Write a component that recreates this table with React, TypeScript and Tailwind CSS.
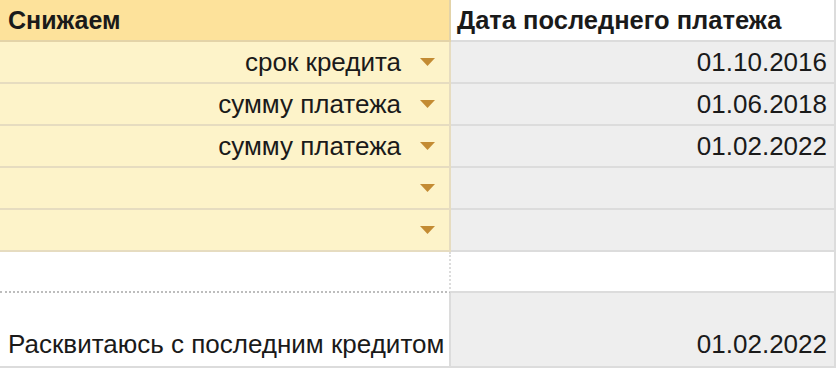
import React from 'react';

type Row = { mode: string; date: string };

const rows: Row[] = [
  { mode: 'срок кредита', date: '01.10.2016' },
  { mode: 'сумму платежа', date: '01.06.2018' },
  { mode: 'сумму платежа', date: '01.02.2022' },
  { mode: '', date: '' },
  { mode: '', date: '' },
];

function Caret() {
  return (
    <svg width="15" height="8" viewBox="0 0 15 8" className="shrink-0">
      <path d="M0 0 H15 L7.5 8 Z" fill="#c38b33" />
    </svg>
  );
}

export default function App() {
  return (
    <div
      className="w-[836px] h-[368px] overflow-hidden bg-white text-[#1a1a1a]"
      style={{ fontFamily: '"Liberation Sans", Arial, sans-serif' }}
    >
      {/* header */}
      <div className="grid grid-cols-[451px_385px] h-[42px]">
        <div className="flex items-center pl-2 pt-[1px] bg-[#fde29b] border-b-2 border-r-2 border-[#e3d3a8] text-[25px] font-bold">
          Снижаем
        </div>
        <div className="flex items-center pl-[6px] pt-[1px] bg-white border-b-2 border-r-2 border-[#dcdcdc] text-[25.5px] font-bold">
          Дата последнего платежа
        </div>
      </div>

      {rows.map((r, i) => (
        <div key={i} className="grid grid-cols-[451px_385px] h-[42px]">
          <div className="flex items-center justify-end gap-[19px] pr-[14px] bg-[#fdf3c9] border-b-2 border-r-2 border-[#e6dcc0] text-[26px]">
            <span>{r.mode}</span>
            <Caret />
          </div>
          <div className="flex items-center justify-end pr-[7px] bg-[#eeeeee] border-b-2 border-r-2 border-[#dcdcdc] text-[26px]">
            {r.date}
          </div>
        </div>
      ))}

      {/* spacer row */}
      <div className="grid grid-cols-[451px_385px] h-[41px]">
        <div className="bg-white border-b-2 border-dotted border-r-2 border-r-[#dcdcdc] border-b-[#bdbdbd]" />
        <div className="bg-white border-b-2 border-r-2 border-[#dcdcdc]" />
      </div>

      {/* total */}
      <div className="grid grid-cols-[451px_385px] h-[75px]">
        <div className="flex items-end pl-2 pb-[2px] bg-white border-b-2 border-r-2 border-[#dcdcdc] text-[26px]">
          Расквитаюсь с последним кредитом
        </div>
        <div className="flex items-end justify-end pr-[7px] pb-[2px] bg-[#eeeeee] border-b-2 border-r-2 border-[#dcdcdc] text-[26px]">
          01.02.2022
        </div>
      </div>
    </div>
  );
}
